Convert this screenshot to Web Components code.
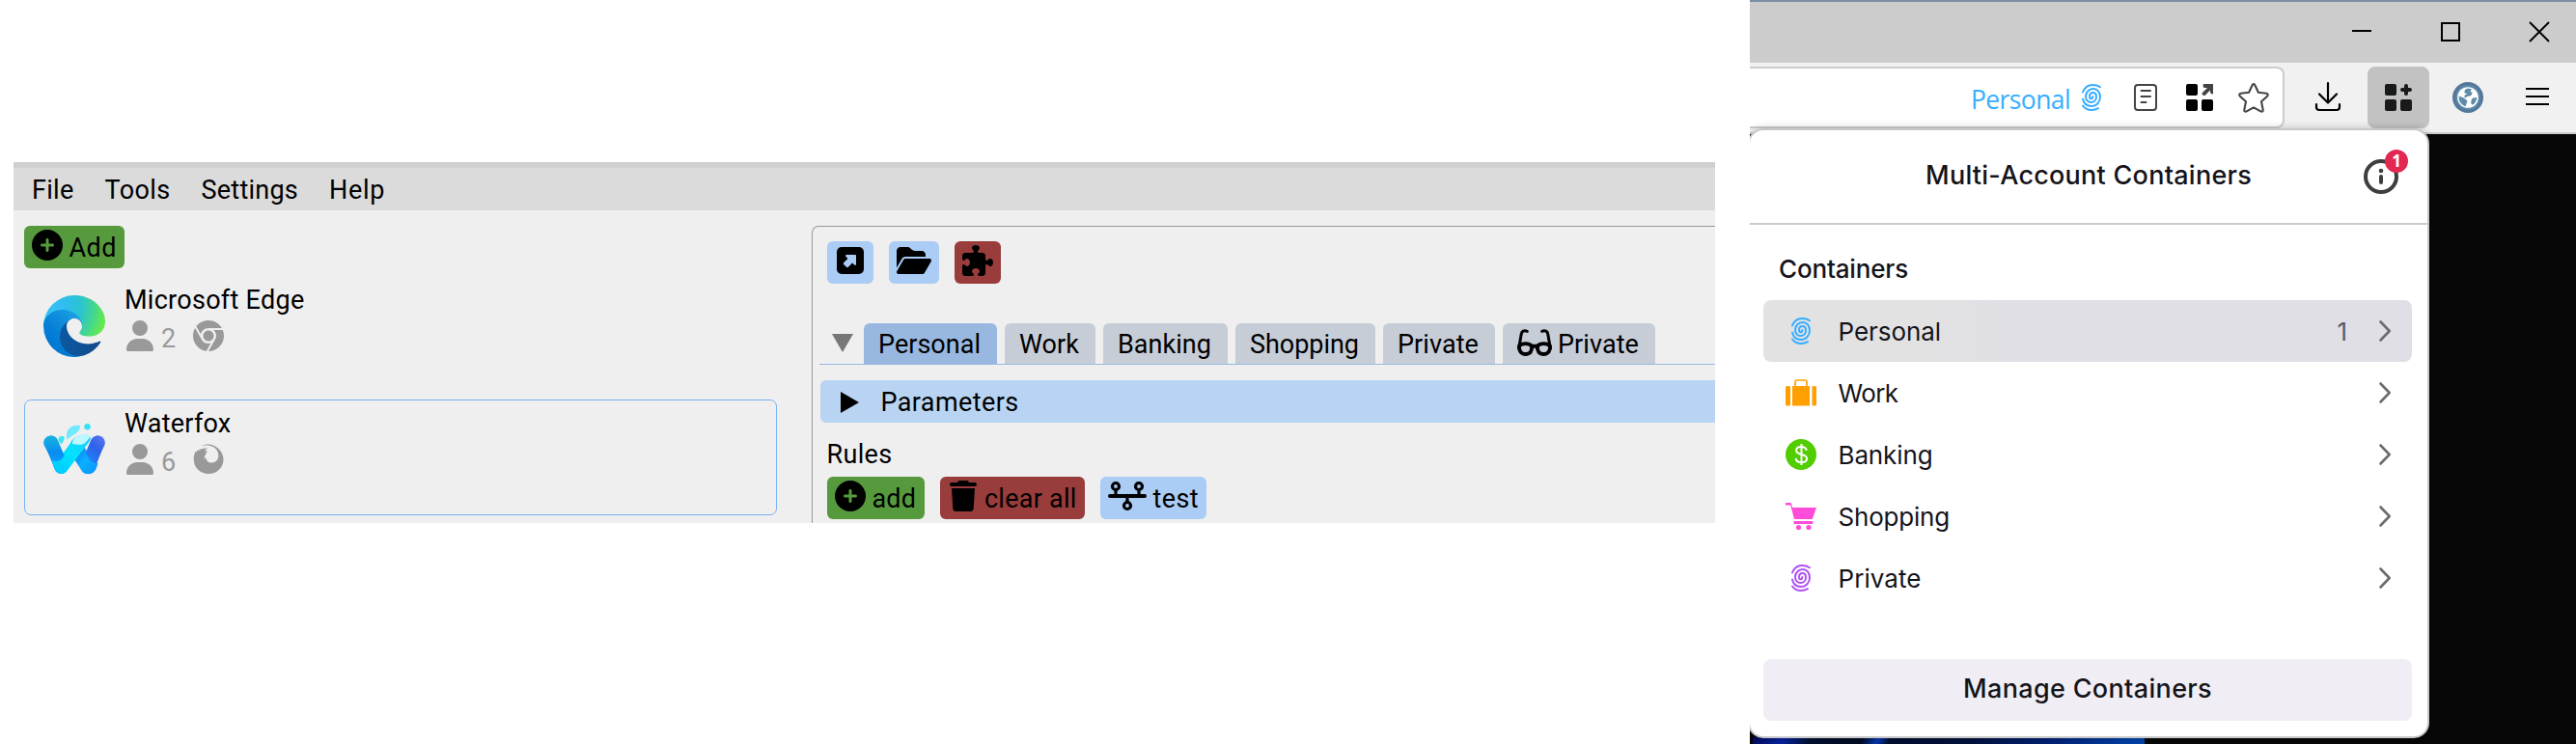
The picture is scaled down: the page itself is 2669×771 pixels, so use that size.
<!DOCTYPE html>
<html lang="en">
<head>
<meta charset="utf-8">
<title>Browser profiles and containers</title>
<style>
body{margin:0;background:#fff;display:flex;align-items:flex-start;width:2669px;height:771px;overflow:hidden;font-family:Roboto,"Liberation Sans",sans-serif;font-size:27px;color:#000}
</style>
</head>
<body>
<profile-manager></profile-manager>
<browser-window></browser-window>
<script>
const define=(name,html,setup)=>customElements.define(name,class extends HTMLElement{
  connectedCallback(){
    if(this.shadowRoot)return;
    const t=document.createElement('template');
    t.innerHTML=typeof html==='function'?html(this):html;
    this.attachShadow({mode:'open'}).append(t.content.cloneNode(true));
    if(setup)setup(this);
  }
});

const finger='<g fill="none" stroke="currentColor" stroke-width="2" stroke-linecap="round"><path d="M1 8.5C3 3.5 6 1 11 1c3.500 0 6 .8 8 2.200M1 15.500C2 20.500 5.500 23 10 23c5.500 0 9-4.500 9-9.500C19 8.500 16 5 12 5 7 5 4 9 4 13c0 3.500 2.500 6 5.500 6 3.500 0 5.500-2.700 5.500-5.500C15 11 13.700 9 11.700 9 9.200 9 8 11 8 13c0 1.500.8 2.300 1.800 2.300 1 0 1.500-.8 1.500-2.300M1 22.500C3 25.500 6 27 10 27c3 0 5-.6 7-1.800"/></g>';
const icons={
 plus:['0 0 512 512','<path d="M256 512A256 256 0 1 0 256 0a256 256 0 1 0 0 512zM232 344V280H168c-13.300 0-24-10.700-24-24s10.700-24 24-24h64V168c0-13.300 10.700-24 24-24s24 10.700 24 24v64h64c13.300 0 24 10.700 24 24s-10.700 24-24 24H280v64c0 13.300-10.700 24-24 24s-24-10.700-24-24z"/>'],
 user:['0 0 448 512','<path d="M224 256A128 128 0 1 0 224 0a128 128 0 1 0 0 256zm-45.700 48C79.800 304 0 383.800 0 482.300C0 498.700 13.300 512 29.700 512H418.300c16.400 0 29.700-13.300 29.700-29.700C448 383.800 368.200 304 269.700 304H178.300z"/>'],
 chrome:['0 0 512 512','<path d="M0 256C0 209.400 12.470 165.600 34.270 127.100L144.100 318.300C166 357.500 207.900 384 256 384C270.300 384 283.100 381.700 296.800 377.400L220.500 509.600C95.900 492.300 0 385.300 0 256zM365.100 321.600C377.400 302.400 384 279.100 384 256C384 217.800 367.200 183.500 340.700 160H493.400C505.400 189.600 512 222.100 512 256C512 397.400 397.400 511.100 256 512L365.100 321.600zM477.800 128H256C193.100 128 142.300 172.100 130.500 230.700L54.190 98.470C101 38.530 174 0 256 0C350.800 0 433.500 51.480 477.800 128zM168 256C168 207.400 207.400 168 256 168C304.600 168 344 207.400 344 256C344 304.600 304.600 344 256 344C207.400 344 168 304.600 168 256z"/>'],
 firefox:['0 0 32 32','<path d="M8.500 2.200C13 0 19.500-.6 24.500 3.500c4.300 3 7 7.500 7 12.700C31.500 24.800 24.500 31 16 31 7.500 31 .7 24.500.7 16c0-3.500.8-6.300 2-8.500l.3 1.700C3.800 7.500 4.500 6.700 5.500 6v1.200C7.500 5 11 4 15.500 4.600c-1.600.5-2.600 1.500-3.200 2.900 1-.2 2-.2 2.900.1-1 .7-1.700 1.800-1.900 3.200l-1 1.500c-.8 1.200-1 2.300-.4 3.400.3-.9.7-1.500 1.300-2 .1 3.500 2.700 5.800 6.300 5.800 4 0 6.800-2.900 6.800-7.200 0-4.300-2.300-7.500-5.600-9.300C17.500 1.500 13 1 8.500 2.200z"/>'],
 launch:['0 0 28 28','<path fill-rule="evenodd" d="M5 0h18a5 5 0 0 1 5 5v18a5 5 0 0 1-5 5H5a5 5 0 0 1-5-5V5a5 5 0 0 1 5-5zm5.200 8c-1.100 0-1.500 1-.8 1.800l2 2.100-4 4c-.8.8-.8 1.500 0 2.300l2.400 2.400c.8.8 1.500.8 2.300 0l4-4 2.100 2c.8.700 1.800.3 1.800-.8V9c0-.6-.4-1-1-1z"/>'],
 folder:['0 32 576 448','<path d="M88.700 223.800L0 375.800V96C0 60.700 28.700 32 64 32H181.500c17 0 33.300 6.700 45.300 18.700l26.500 26.500c12 12 28.300 18.700 45.300 18.700H416c35.300 0 64 28.700 64 64v32H144c-22.800 0-43.800 12.100-55.300 31.800zm27.600 16.100C122.100 230 132.600 224 144 224H544c11.500 0 22 6.100 27.700 16.100s5.700 22.200-.1 32.100l-112 192C453.900 474 443.400 480 432 480H32c-11.500 0-22-6.100-27.700-16.100s-5.700-22.200 .1-32.100l112-192z"/>'],
 puzzle:['0 0 512 512','<path d="M192 104.800c0-9.200-5.800-17.300-13.200-22.800C167.200 73.300 160 61.300 160 48c0-26.500 28.700-48 64-48s64 21.500 64 48c0 13.300-7.200 25.300-18.800 34c-7.400 5.500-13.200 13.600-13.200 22.800v0c0 12.800 10.400 23.200 23.200 23.200H336c26.500 0 48 21.500 48 48v56.800c0 12.800 10.400 23.200 23.200 23.200v0c9.200 0 17.300-5.800 22.800-13.200c8.700-11.600 20.700-18.800 34-18.800c26.500 0 48 28.700 48 64s-21.500 64-48 64c-13.300 0-25.300-7.200-34-18.800c-5.500-7.400-13.600-13.200-22.800-13.200v0c-12.800 0-23.200 10.400-23.200 23.200V464c0 26.500-21.500 48-48 48H279.200c-12.800 0-23.200-10.400-23.200-23.200v0c0-9.200 5.800-17.300 13.200-22.800c11.600-8.700 18.800-20.700 18.800-34c0-26.500-28.700-48-64-48s-64 21.500-64 48c0 13.300 7.200 25.300 18.800 34c7.400 5.500 13.200 13.600 13.200 22.800v0c0 12.800-10.400 23.200-23.200 23.200H48c-26.500 0-48-21.500-48-48V343.200C0 330.400 10.400 320 23.200 320v0c9.200 0 17.300 5.800 22.800 13.200C54.700 344.800 66.700 352 80 352c26.500 0 48-28.700 48-64s-21.500-64-48-64c-13.300 0-25.300 7.200-34 18.800C40.500 250.200 32.400 256 23.200 256v0C10.400 256 0 245.600 0 232.800V176c0-26.500 21.500-48 48-48H168.800c12.800 0 23.200-10.400 23.200-23.200v0z"/>'],
 trash:['0 0 448 512','<path d="M135.200 17.700L128 32H32C14.300 32 0 46.300 0 64S14.300 96 32 96H416c17.700 0 32-14.300 32-32s-14.300-32-32-32H320l-7.200-14.300C307.400 6.800 296.300 0 284.200 0H163.800c-12.100 0-23.200 6.800-28.600 17.700zM416 128H32L53.200 467c1.600 25.300 22.600 45 47.900 45H346.900c25.300 0 46.300-19.700 47.900-45L416 128z"/>'],
 nodes:['0 0 40 30','<g fill="none" stroke="currentColor" stroke-width="3.200"><circle cx="8" cy="5" r="3.500"/><circle cx="32" cy="5" r="3.500"/><circle cx="20" cy="25" r="3.500"/><path d="M8 8v7M32 8v7M20 15v7"/><path d="M2 15h36" stroke-width="4" stroke-linecap="round"/></g>'],
 glasses:['0 0 36 28','<g fill="none" stroke="currentColor" stroke-linecap="round"><path d="M1.700 20 4.200 5.200C4.700 2.200 7 .9 10.300 2.300M34.300 20 31.800 5.200C31.300 2.200 29 .9 25.700 2.300" stroke-width="3"/><path d="M2 17.500C5 14.500 12 14.200 15 17.500c.8 5-1.500 8.500-6.500 8.500-4.500 0-7-3.500-6.500-8.500zM34 17.500c-3-3-10-3.300-13 0-.8 5 1.500 8.500 6.500 8.500 4.500 0 7-3.500 6.500-8.500z" stroke-width="3.800" stroke-linejoin="round"/><path d="M15 17.800h6" stroke-width="4"/></g>'],
 down:['0 0 22 20','<path d="M0 0h22L11 20z"/>'],
 right:['0 0 20 22','<path d="M0 0l20 11L0 22z"/>'],
 finger:['0 0 20 28',finger],
 reader:['0 0 24 28','<g fill="none" stroke="currentColor" stroke-width="2"><rect x="1" y="1" width="22" height="26" rx="3"/><path d="M7.500 7h9.500M7.500 13h9.500M7.500 19h5" stroke-linecap="round"/></g>'],
 gridarrow:['0 0 28 28','<rect width="12" height="12" rx="2"/><rect y="16" width="12" height="12" rx="2"/><rect x="16" y="16" width="12" height="12" rx="2"/><path fill="#444" d="M18 0h10v10.500c-1.500 0-2.500-.7-3-1.500V6.500L19.500 12c-1.500.5-3-.8-3-2.500L22 4h-3.500C17.500 3.500 17.500.5 18 0z"/>'],
 gridplus:['0 0 28 28','<rect width="12" height="12" rx="2"/><rect y="16" width="12" height="12" rx="2"/><rect x="16" y="16" width="12" height="12" rx="2"/><path d="M22 2v8M18 6h8" stroke="currentColor" stroke-width="4" stroke-linecap="round"/>'],
 star:['0 0 32 31','<path d="M14.600 2.200c.6-1.500 2.200-1.500 2.800 0l3.500 7.600 8.200 1c1.700.2 2.200 1.700 1 2.900l-6.100 5.500 1.700 8.500c.3 1.600-1 2.500-2.400 1.700L16 25.400l-7.300 4c-1.400.8-2.700-.1-2.400-1.700L8 19.200l-6.100-5.500c-1.200-1.200-.7-2.700 1-2.900l8.200-1z" fill="none" stroke="currentColor" stroke-width="2.100" stroke-linejoin="round"/>'],
 download:['0 0 26 30','<g fill="none" stroke="currentColor" stroke-width="2.200" stroke-linecap="round" stroke-linejoin="round"><path d="M13 1v20M4 12.500l9 9 9-9M1 23v3c0 2 1 3 3 3h18c2 0 3-1 3-3v-3"/></g>'],
 menu:['0 0 24 20','<path d="M0 2h24M0 10h24M0 18h24" stroke="currentColor" stroke-width="2.200"/>'],
 min:['0 0 20 20','<path d="M0 9h20" stroke="currentColor" stroke-width="2"/>'],
 max:['0 0 20 20','<rect x="1" y="1" width="18" height="18" fill="none" stroke="currentColor" stroke-width="2"/>'],
 close:['0 0 20 20','<path d="M0 0l20 20M20 0L0 20" stroke="currentColor" stroke-width="1.900"/>'],
 globe:['0 0 32 32','<circle cx="16" cy="16" r="16" fill="#557799"/><circle cx="16" cy="16" r="12.700" fill="#5e8cab"/><circle cx="16" cy="16" r="10.800" fill="#fff"/><path fill="#5e8cab" d="M13 8c2-1.700 5-1.600 7-.5l-1.500 2.300 2.300 1.500-2 3.200-3.300.2-2.500 2-.8-2.500 3-2.200-3-.8zM6.800 14.500l5 2 3.700 3-1 3-1 2.800c-3.500-1.300-6.700-4.500-6.700-8.300zM21 16.500l4.300-.5c-.2 3-1.800 6-4.300 7.700l-1.800-1.500.3-3.500z"/>'],
 info:['0 0 36 36','<circle cx="18" cy="18" r="16" fill="none" stroke="currentColor" stroke-width="4"/><circle cx="18" cy="12" r="2.300"/><rect x="16" y="16" width="4" height="10" rx="2"/>'],
 chevron:['0 0 12 22','<path d="M1.500 1.500 10.700 11 1.500 20.500" fill="none" stroke="currentColor" stroke-width="2.600" stroke-linecap="round" stroke-linejoin="round"/>'],
 work:['0 0 32 28','<rect y="7" width="5" height="20.500" rx="1.500"/><rect x="27.500" y="7" width="4.500" height="20.500" rx="1.500"/><rect x="7" y="7" width="18" height="20.500"/><path d="M10 8V2.500c0-1 .5-1.500 1.500-1.500h9c1 0 1.500.5 1.500 1.500V8" fill="none" stroke="currentColor" stroke-width="1.700"/>'],
 bank:['0 0 32 32','<circle cx="16" cy="16" r="16"/><path d="M21.800 11.800C21.300 9.300 19.200 8 16.300 8c-3 0-5.200 1.300-5.200 3.800 0 5.800 11 2.400 11 8.300 0 2.600-2.400 4.200-5.600 4.200-3.300 0-5.500-1.500-5.900-4.300M16.500 5v22" fill="none" stroke="#fff" stroke-width="2"/>'],
 cart:['0 0 32 28','<path d="M0 0h4.500c.8 0 1.200.3 1.500 1l1.200 4H32L27.800 17H9L5.200 2.500H0zM8.500 19h19.800v3H8.500z"/><circle cx="13.500" cy="25.500" r="2.600"/><circle cx="24" cy="25.500" r="2.600"/>'],
 edge:['0 0 256 256','<defs><linearGradient id="a" x1="63" y1="178" x2="241" y2="178" gradientUnits="userSpaceOnUse"><stop stop-color="#0c59a4"/><stop offset="1" stop-color="#114a8b"/></linearGradient><linearGradient id="b" x1="150" y1="100" x2="46" y2="213" gradientUnits="userSpaceOnUse"><stop stop-color="#1b9de2"/><stop offset=".16" stop-color="#1595df"/><stop offset=".67" stop-color="#0680d7"/><stop offset="1" stop-color="#0078d4"/></linearGradient><radialGradient id="c" cx="30" cy="54" r="235" gradientUnits="userSpaceOnUse"><stop stop-color="#35c1f1"/><stop offset=".25" stop-color="#30bdf0"/><stop offset=".55" stop-color="#2ac3d2"/><stop offset=".78" stop-color="#44d691"/><stop offset="1" stop-color="#66eb4a"/></radialGradient></defs><g transform="translate(-4.630 -4.920)"><path fill="url(#a)" d="M235.680,195.460a93.730,93.730,0,0,1-10.540,4.710,101.870,101.870,0,0,1-35.900,6.460c-47.320,0-88.540-32.550-88.540-74.320A31.480,31.480,0,0,1,117.130,105c-42.800,1.800-53.800,46.400-53.800,72.530,0,73.880,68.090,81.370,82.760,81.370,7.910,0,19.840-2.300,27-4.560l1.310-.44A128.340,128.340,0,0,0,241,201.100,4,4,0,0,0,235.680,195.460Z"/><path fill="url(#b)" d="M110.340,246.340A79.200,79.200,0,0,1,87.600,225a80.720,80.720,0,0,1,29.530-120c3.120-1.470,8.450-4.130,15.540-4a32.350,32.350,0,0,1,25.690,13,31.880,31.880,0,0,1,6.360,18.660c0-.21,24.460-79.600-80-79.600-43.900,0-80,41.660-80,78.210a130.150,130.150,0,0,0,12.110,56,128,128,0,0,0,156.380,67.110,75.550,75.550,0,0,1-62.780-8Z"/><path fill="url(#c)" d="M156.940,153.780c-.81,1.050-3.300,2.500-3.300,5.660,0,2.610,1.700,5.120,4.720,7.230,14.380,10,41.490,8.680,41.560,8.680a59.560,59.560,0,0,0,30.270-8.350A61.380,61.380,0,0,0,260.620,114.100c.26-22.410-8-37.310-11.340-43.910C228.090,28.760,182.350,4.920,132.620,4.920a128,128,0,0,0-128,126.200c.48-36.540,36.800-66.050,80-66.050,3.500,0,23.460.34,42,10.070,16.340,8.580,24.900,18.940,30.850,29.210,6.180,10.670,7.280,24.150,7.280,29.520S162,147.200,156.940,153.780Z"/></g>'],
 waterfox:['0 0 64 64','<defs><linearGradient id="a" x1="0" y1="0" x2="0" y2="1"><stop stop-color="#16b5da"/><stop offset=".6" stop-color="#0a8cf2"/><stop offset="1" stop-color="#0b9cff"/></linearGradient><linearGradient id="b" x1="1" y1="0" x2=".3" y2="1"><stop stop-color="#6478f0"/><stop offset=".5" stop-color="#2d62e8"/><stop offset="1" stop-color="#1e86f7"/></linearGradient><linearGradient id="c" x1="1" y1="0" x2="0" y2="1"><stop stop-color="#27c8ff"/><stop offset=".5" stop-color="#00e4ff"/><stop offset="1" stop-color="#00c4ff"/></linearGradient><linearGradient id="d" x1="0" y1="0" x2="1" y2="1"><stop stop-color="#0878ee"/><stop offset=".5" stop-color="#0bb0ff"/><stop offset="1" stop-color="#0a8fff"/></linearGradient></defs><g fill="none" stroke-linecap="round" stroke-linejoin="round" stroke-width="14"><path d="M8 24.500 18.500 50" stroke="#0a8cf0"/><path d="M56.500 24.500 46 50" stroke="#2f66ea"/><path d="M37 34 46 50" stroke="#0c9cff"/><path d="M18.500 50 37 25" stroke="#00dcff"/></g><path fill="url(#a)" d="M.5 27C-1 21 4 17 8.500 17.500c3 .3 5 2 6.200 4.500L22 39l-4 7c-3 1.500-7-1-9-3z"/><path fill="url(#b)" d="M63.500 27C65 21 60 17 55.500 17.500c-3 .3-5 2-6.200 4.500L42 39l4 7c3 1.500 7-1 9-3z"/><path fill="url(#d)" d="M39 28l-7 14 6.500 10c3 7 13 7 16 0l2-6c-6 0-9-3-11-8z"/><path fill="url(#c)" d="M8.500 43c6 2 10 1 13-5l7-14c3-5 9-8 15-7.500 6 .5 7 3 3 8.500L25 53c-3 5-11 5-13.500-1z"/><path fill="#bdf7ff" d="M30 26c0-7 9-12 17-9 4 1 0 3-2 6-4 5-8 4-15 3z"/><path fill="#6feaff" d="M24.500 21.500c-2-8 2-16 13.500-14.500 0 8-7 8.500-13.500 14.500z"/><path fill="#3ee5f5" d="M15.500 21.500c0-4 4-4 6-3 1 4-2 5-2 8-2-1-4-3-4-5z"/><circle cx="45.500" cy="8.300" r="3.200" fill="#35e2f7"/>']
};
define('ui-icon',e=>{const [vb,body]=icons[e.getAttribute('name')];return `<style>:host{display:block;flex:none}svg{display:block;width:100%;height:100%;fill:currentColor;overflow:visible}</style><svg viewBox="${vb}" preserveAspectRatio="none">${body}</svg>`});

/* Single-line label that spreads its letters over a given advance width. */
define('fit-text','<style>:host{display:block;flex:none;white-space:nowrap;line-height:32px}span{display:inline-block}</style><span><slot></slot></span>',e=>{
  const w=+e.getAttribute('w');
  if(!w)return;
  e.style.width=w+'px';
  const s=e.shadowRoot.querySelector('span'),n=e.textContent.length;
  s.style.letterSpacing=(w-s.getBoundingClientRect().width)/n+'px';
});

define('action-button',`<style>:host{display:flex;box-sizing:border-box;height:44px;border-radius:6px;background:#aaccf5;align-items:flex-start;flex:none}
:host([tone=green]){background:#579a3d}:host([tone=red]){background:#993c3c}</style><slot></slot>`);

define('profile-row',e=>`<style>:host{display:flex;box-sizing:border-box;width:780px;height:120px;border:1px solid transparent;border-radius:7px;padding:19px 0 0 19px}
:host([selected]){border-color:#7ab2f5}
.logo{width:64px;height:64px}.info{margin:-11px 0 0 20px}.meta{display:flex;color:#999;align-items:flex-start;margin-top:5px;padding-left:2px}
.user{width:28px;height:32px}.engine{width:32px;height:32px;margin-left:17px}.meta fit-text{margin:3px 0 0 8px}</style>
<ui-icon class="logo" name="${e.getAttribute('logo')}"></ui-icon><div class="info"><fit-text w="${e.getAttribute('w')}">${e.getAttribute('label')}</fit-text><div class="meta"><ui-icon class="user" name="user"></ui-icon><fit-text w="16">${e.getAttribute('count')}</fit-text><ui-icon class="engine" name="${e.getAttribute('engine')}"></ui-icon></div></div>`);

define('profile-tab',`<style>:host{display:flex;box-sizing:border-box;height:42px;padding:1px 17px 0 15px;border-radius:6px 6px 0 0;background:#c6cdd7;align-items:center}:host([active]){background:#98b8e0}</style><slot></slot>`);

define('menu-bar',`<style>:host{display:flex;box-sizing:border-box;height:50px;border-top:6px solid #d0d0d0;background:#dbdbdb;padding:2px 0 0 19px;gap:32px;align-items:center}</style>
<fit-text w="43.500">File</fit-text><fit-text w="68">Tools</fit-text><fit-text w="100.500">Settings</fit-text><fit-text w="58">Help</fit-text>`);

define('profile-panel',`<style>:host{display:block;box-sizing:border-box;width:936px;height:308px;margin-top:16px;border:solid #999;border-width:1px 0 0 1px;border-radius:7px 0 0 0;overflow:hidden}
.tools,.rules{display:flex;gap:16px;padding-left:15px}.tools{padding-top:15px}
.tabs{display:flex;gap:8px;margin:41px 0 0 7px;border-bottom:1px solid #98b8e0;padding-left:13px}
.down{width:22px;height:19px;color:#777;margin:11px 3px 0 0}
.params{display:flex;box-sizing:border-box;height:44px;margin:16px 0 0 8px;border-radius:6px 0 0 6px;background:#b9d4f3;align-items:center;padding:1px 0 0 21px;gap:22.500px}
.title{padding:17px 0 7px 14.500px}</style>
<div class="tools"><action-button style="padding:6px 10px"><ui-icon name="launch" style="width:28px;height:28px"></ui-icon></action-button><action-button style="padding:6px 8px"><ui-icon name="folder" style="width:36px;height:28px"></ui-icon></action-button><action-button tone="red" style="padding:4px 8px"><ui-icon name="puzzle" style="width:32px;height:32px"></ui-icon></action-button></div>
<div class="tabs"><ui-icon class="down" name="down"></ui-icon><profile-tab active><fit-text w="106">Personal</fit-text></profile-tab><profile-tab><fit-text w="62">Work</fit-text></profile-tab><profile-tab><fit-text w="97">Banking</fit-text></profile-tab><profile-tab><fit-text w="113">Shopping</fit-text></profile-tab><profile-tab><fit-text w="84">Private</fit-text></profile-tab><profile-tab><ui-icon name="glasses" style="width:36px;height:28px;margin:-4px 6px 0 0"></ui-icon><fit-text w="84">Private</fit-text></profile-tab></div>
<div class="params"><ui-icon name="right" style="width:19px;height:22px"></ui-icon><fit-text w="143">Parameters</fit-text></div>
<div class="title"><fit-text w="68">Rules</fit-text></div>
<div class="rules"><action-button tone="green" style="width:101px;padding:4px 8px"><ui-icon name="plus" style="width:32px;height:32px"></ui-icon><fit-text w="45.500" style="margin:3px 0 0 6.500px">add</fit-text></action-button><action-button tone="red" style="width:150px;padding:4px 10px"><ui-icon name="trash" style="width:28px;height:32px"></ui-icon><fit-text w="95.500" style="margin:3px 0 0 8px">clear all</fit-text></action-button><action-button style="width:110px;padding:4px 8px"><ui-icon name="nodes" style="width:40px;height:30px;margin-top:1px"></ui-icon><fit-text w="47.500" style="margin:3px 0 0 6.500px">test</fit-text></action-button></div>`);

define('profile-manager',`<style>:host{display:flex;flex-direction:column;flex:none;width:1763px;height:374px;margin:168px 0 0 14px;background:#efefef;overflow:hidden}
.body{display:flex}.list{display:flex;flex-direction:column;align-items:flex-start;gap:8px;box-sizing:border-box;width:827px;padding:16px 0 0 11px}</style>
<menu-bar></menu-bar><div class="body"><div class="list"><action-button tone="green" style="width:104px;padding:4px 8px"><ui-icon name="plus" style="width:32px;height:32px"></ui-icon><fit-text w="49.500" style="margin:3px 0 0 6.500px">Add</fit-text></action-button>
<profile-row logo="edge" label="Microsoft Edge" w="186.500" count="2" engine="chrome"></profile-row><profile-row selected logo="waterfox" label="Waterfox" w="110.500" count="6" engine="firefox"></profile-row></div><profile-panel></profile-panel></div>`);

define('container-row',e=>`<style>:host{display:flex;box-sizing:border-box;height:64px;border-radius:8px;align-items:center;padding:0 22px 0 23px}:host([active]){background:linear-gradient(90deg,#e2e2e3 25%,#e0dfe5 38%)}
.slot{width:32px;display:flex;justify-content:center;margin-right:22.500px;color:${e.getAttribute('color')}}.grow{flex:1}fit-text{margin-top:2px}.count{color:#5b5b66;margin-right:33px}.chev{width:12px;height:22px;color:#6c6c6c}</style>
<div class="slot"><ui-icon name="${e.getAttribute('icon')}" style="width:${e.getAttribute('iw')}px;height:${e.getAttribute('ih')}px"></ui-icon></div><fit-text w="${e.getAttribute('w')}">${e.getAttribute('label')}</fit-text><div class="grow"></div>${e.hasAttribute('count')?`<fit-text class="count">${e.getAttribute('count')}</fit-text>`:''}<ui-icon class="chev" name="chevron"></ui-icon>`);

define('containers-popup',`<style>:host{display:block;box-sizing:border-box;width:706px;height:632px;border:2px solid #c8c8ca;border-radius:16px;background:#fff;color:#15141a;font:26px Inter,sans-serif;box-shadow:0 0 8px rgba(0,0,0,.22)}
header{display:flex;box-sizing:border-box;height:98px;border-bottom:2px solid #ccc;align-items:center;padding-left:182px}
header fit-text,footer fit-text{font-size:27px;font-weight:450;margin-bottom:3px}
.info{position:relative;margin-left:116px;color:#3e3e40}.info ui-icon{width:36px;height:36px}
.badge{position:absolute;left:22px;top:-10px;width:24px;height:24px;border-radius:50%;background:#e22850;color:#fff;font:700 17px/24px "Noto Sans",sans-serif;text-align:center}
h2{margin:0;font-size:26px;font-weight:450;padding:30px 0 16px 30px}
.list{margin:0 16px 0 14px}
footer{display:flex;height:64px;margin:52px 16px 0 14px;border-radius:8px;background:#f0eef4;align-items:center;justify-content:center}</style>
<header><fit-text w="338">Multi-Account Containers</fit-text><div class="info"><ui-icon name="info"></ui-icon><div class="badge">1</div></div></header>
<h2><fit-text w="134">Containers</fit-text></h2>
<div class="list"><container-row active icon="finger" iw="20" ih="28" color="#37adff" label="Personal" w="106.500" count="1"></container-row><container-row icon="work" iw="32" ih="28" color="#ff9f00" label="Work" w="62"></container-row><container-row icon="bank" iw="32" ih="32" color="#51cd00" label="Banking" w="98"></container-row><container-row icon="cart" iw="32" ih="28" color="#ff4bda" label="Shopping" w="115.500"></container-row><container-row icon="finger" iw="20" ih="28" color="#af51f5" label="Private" w="86"></container-row></div>
<footer><fit-text w="258">Manage Containers</fit-text></footer>`);

define('address-bar',`<style>:host{display:flex;flex:none;box-sizing:border-box;width:554px;height:64px;border:2px solid #ccc;border-left:0;border-radius:0 8px 8px 0;background:#fff;align-items:center;color:#444;padding-left:229px}
fit-text{color:#37adff;font:400 26.500px/32px "Open Sans",sans-serif;margin-top:3px}</style>
<fit-text w="103">Personal</fit-text><ui-icon name="finger" style="width:20px;height:28px;margin-left:12px;color:#37adff"></ui-icon><ui-icon name="reader" style="width:24px;height:28px;margin-left:34px"></ui-icon><ui-icon name="gridarrow" style="width:28px;height:28px;margin-left:30px;color:#000"></ui-icon><ui-icon name="star" style="width:32px;height:31px;margin-left:26px"></ui-icon>`);

define('browser-window',`<style>:host{display:flex;flex-direction:column;flex:none;position:relative;box-sizing:border-box;width:856px;height:771px;margin-left:36px;background:#ccc;border-top:2px solid #7b8fa4;overflow:hidden}
.title{display:flex;height:63px;justify-content:flex-end;box-sizing:border-box;padding:21px 28px 0 0;gap:72px}.title ui-icon{width:20px;height:20px}
.bar{display:flex;box-sizing:border-box;height:74px;padding-top:4px;background:#f1f1f2;border-bottom:2px solid #ccc}
.active{display:flex;width:64px;height:64px;margin-left:27px;border-radius:8px;background:#c2c2c2;align-items:center;justify-content:center;color:#18191a}
.page{flex:1;background:#070707;display:flex;align-items:flex-end;padding-left:3px}
.art{width:406px;height:7px;background:linear-gradient(120deg,#020b58,#0622a0 8%,#010f30 15%,#000b22 28%,#0638b4 32%,#000d30 35%,#00113a 55%,#002073 75%,#0045ae)}
containers-popup{position:absolute;left:-2px;top:131px}</style>
<div class="title"><ui-icon name="min"></ui-icon><ui-icon name="max"></ui-icon><ui-icon name="close"></ui-icon></div>
<div class="bar"><address-bar></address-bar><ui-icon name="download" style="width:26px;height:30px;margin:16px 0 0 32px"></ui-icon><div class="active" style="margin-left:28px"><ui-icon name="gridplus" style="width:28px;height:28px"></ui-icon></div><ui-icon name="globe" style="width:32px;height:32px;margin:16px 0 0 24px"></ui-icon><ui-icon name="menu" style="width:24px;height:20px;margin:21px 0 0 44px"></ui-icon></div>
<div class="page"><div class="art"></div></div><containers-popup></containers-popup>`);
</script>
</body>
</html>
